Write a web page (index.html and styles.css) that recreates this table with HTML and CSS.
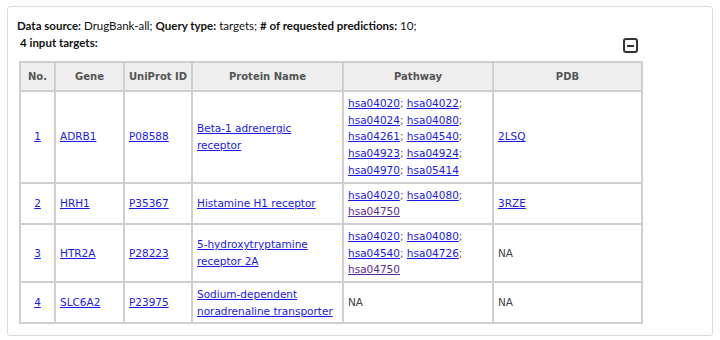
FILE: index.html
```html
<!DOCTYPE html>
<html>
<head>
<meta charset="utf-8">
<link rel="stylesheet" href="styles.css">
</head>
<body>
<div class="panel">
  <div class="summary"><b>Data source:</b> DrugBank-all; <b>Query type:</b> targets; <b># of requested predictions:</b> 10;</div>
  <div class="subhead">
    <span class="count">4 input targets:</span>
    <span class="toggle"><span class="bar"></span></span>
  </div>
  <table class="targets">
    <colgroup>
      <col class="c-no"><col class="c-gene"><col class="c-uni"><col class="c-prot"><col class="c-path"><col class="c-pdb">
    </colgroup>
    <thead>
      <tr><th>No.</th><th>Gene</th><th>UniProt ID</th><th>Protein Name</th><th>Pathway</th><th>PDB</th></tr>
    </thead>
    <tbody>
      <tr>
        <td class="num"><a href="#">1</a></td>
        <td><a href="#">ADRB1</a></td>
        <td><a href="#">P08588</a></td>
        <td><a href="#">Beta-1 adrenergic receptor</a></td>
        <td><a href="#">hsa04020</a>; <a href="#">hsa04022</a>; <a href="#">hsa04024</a>; <a href="#">hsa04080</a>; <a href="#">hsa04261</a>; <a href="#">hsa04540</a>; <a href="#">hsa04923</a>; <a href="#">hsa04924</a>; <a href="#">hsa04970</a>; <a href="#">hsa05414</a></td>
        <td><a href="#">2LSQ</a></td>
      </tr>
      <tr>
        <td class="num"><a href="#">2</a></td>
        <td><a href="#">HRH1</a></td>
        <td><a href="#">P35367</a></td>
        <td><a href="#">Histamine H1 receptor</a></td>
        <td><a href="#">hsa04020</a>; <a href="#">hsa04080</a>; <a class="visited" href="#">hsa04750</a></td>
        <td><a href="#">3RZE</a></td>
      </tr>
      <tr>
        <td class="num"><a href="#">3</a></td>
        <td><a href="#">HTR2A</a></td>
        <td><a href="#">P28223</a></td>
        <td><a href="#">5-hydroxytryptamine receptor 2A</a></td>
        <td><a href="#">hsa04020</a>; <a href="#">hsa04080</a>; <a href="#">hsa04540</a>; <a href="#">hsa04726</a>; <a class="visited" href="#">hsa04750</a></td>
        <td class="na">NA</td>
      </tr>
      <tr>
        <td class="num"><a href="#">4</a></td>
        <td><a href="#">SLC6A2</a></td>
        <td><a href="#">P23975</a></td>
        <td><a href="#">Sodium-dependent noradrenaline transporter</a></td>
        <td class="na">NA</td>
        <td class="na">NA</td>
      </tr>
    </tbody>
  </table>
</div>
</body>
</html>
```
FILE: styles.css
```css
html, body {
  margin: 0;
  padding: 0;
  background: #ffffff;
}
.panel {
  margin: 6px 7px 0 7px;
  border: 1px solid #dcdcdc;
  border-radius: 3px;
  padding: 10px 9px 11px 9px;
  font-family: Lato, "Open Sans", sans-serif;
  font-size: 11.5px;
  color: #111;
}
.summary {
  line-height: 17px;
}
.summary b {
  font-weight: 700;
}
.subhead {
  display: flex;
  justify-content: space-between;
  align-items: flex-start;
  width: 624px;
  line-height: 17px;
}
.count {
  font-weight: 700;
  padding-left: 3px;
}
.toggle {
  box-sizing: border-box;
  width: 15px;
  height: 15px;
  margin-top: 4px;
  margin-right: 3px;
  border: 2px solid #333;
  border-radius: 3px;
  display: flex;
  align-items: center;
  justify-content: center;
}
.toggle .bar {
  width: 7px;
  height: 2px;
  background: #333;
}
.targets {
  margin-top: 8px;
  margin-left: 2px;
  border-collapse: collapse;
  table-layout: fixed;
  width: 624px;
  font-family: "DejaVu Sans", Verdana, sans-serif;
  font-size: 10.5px;
  border: 2px solid #cfcfcf;
}
.c-no { width: 35px; }
.c-gene { width: 69px; }
.c-uni { width: 68px; }
.c-prot { width: 151px; }
.c-path { width: 150px; }
.c-pdb { width: 149px; }
.targets th {
  background: #eeeeee;
  color: #555;
  font-weight: 700;
  font-size: 10px;
  height: 27px;
  padding: 0 2px;
  white-space: nowrap;
  border: 2px solid #cfcfcf;
  text-align: center;
  vertical-align: middle;
}
.targets td {
  border: 2px solid #cfcfcf;
  padding: 3px 4px;
  line-height: 16.7px;
  vertical-align: middle;
  text-align: left;
  color: #555;
}
.targets td.num {
  text-align: center;
}
.targets td.na {
  color: #444;
}
.targets a {
  color: #1a1ae8;
  text-decoration: underline;
}
.targets a.visited {
  color: #5a2a96;
}
```
